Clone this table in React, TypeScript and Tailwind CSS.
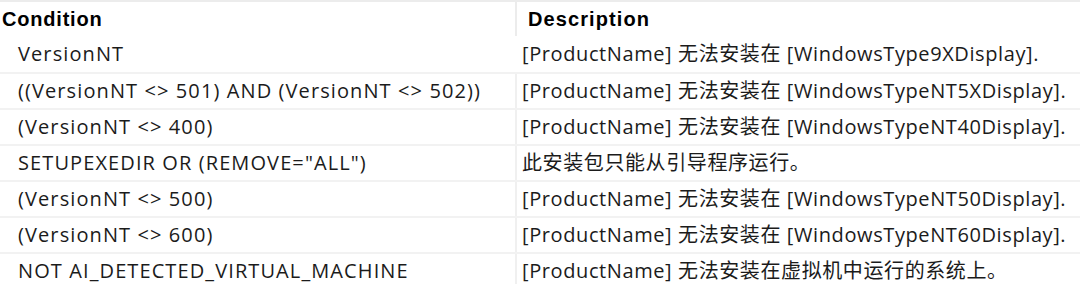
const rows: [string, string][] = [
  ["VersionNT", "[ProductName] 无法安装在 [WindowsType9XDisplay]."],
  ["((VersionNT <> 501) AND (VersionNT <> 502))", "[ProductName] 无法安装在 [WindowsTypeNT5XDisplay]."],
  ["(VersionNT <> 400)", "[ProductName] 无法安装在 [WindowsTypeNT40Display]."],
  ['SETUPEXEDIR OR (REMOVE="ALL")', "此安装包只能从引导程序运行。"],
  ["(VersionNT <> 500)", "[ProductName] 无法安装在 [WindowsTypeNT50Display]."],
  ["(VersionNT <> 600)", "[ProductName] 无法安装在 [WindowsTypeNT60Display]."],
  ["NOT AI_DETECTED_VIRTUAL_MACHINE", "[ProductName] 无法安装在虚拟机中运行的系统上。"],
];

export default function App() {
  return (
    <div
      className="w-[1080px] h-[284px] overflow-hidden bg-white text-[#1b1b1b]"
      style={{ fontFamily: '"Open Sans", "Noto Sans CJK SC", sans-serif' }}
    >
      {/* header */}
      <div className="grid grid-cols-[517px_1fr] h-9 border-t-2 border-[#ececec]">
        <div
          className="flex items-center pl-[2px] border-r-2 border-[#ececec] text-[20px] font-bold tracking-[0.8px] text-black"
          style={{ fontFamily: '"Liberation Sans", sans-serif' }}
        >
          Condition
        </div>
        <div
          className="flex items-center pl-[11px] text-[20px] font-bold tracking-[1.1px] text-black"
          style={{ fontFamily: '"Liberation Sans", sans-serif' }}
        >
          Description
        </div>
      </div>

      {rows.map(([cond, desc], i) => (
        <div
          key={i}
          className={
            i === 0
              ? "grid grid-cols-[517px_1fr] h-9"
              : "grid grid-cols-[517px_1fr] h-9 border-t-2 border-[#f2f2f2]"
          }
        >
          <div
            className={
              i === 0
                ? "flex items-center pl-[18px] text-[20px] tracking-[1.1px] whitespace-nowrap"
                : "flex items-center pl-[18px] text-[20px] tracking-[1.1px] whitespace-nowrap border-r-2 border-[#f0f0f0]"
            }
          >
            {cond}
          </div>
          <div className="flex items-center pl-[5px] text-[20px] tracking-[0.6px] whitespace-nowrap">
            {desc}
          </div>
        </div>
      ))}
    </div>
  );
}
